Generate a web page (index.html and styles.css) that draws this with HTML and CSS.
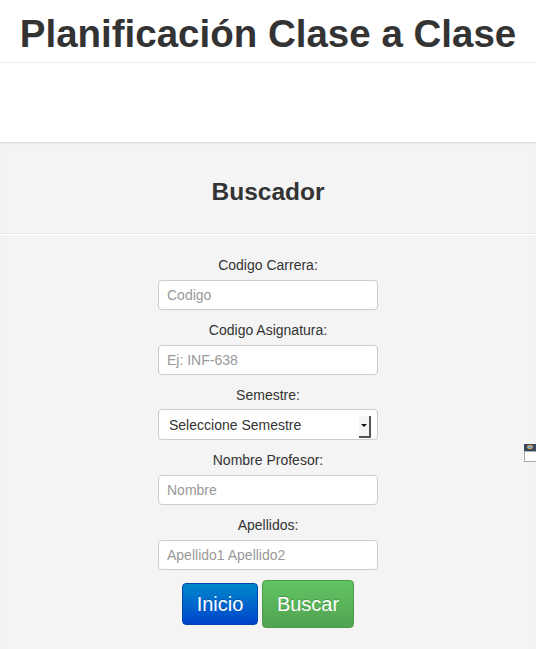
FILE: index.html
```html
<!DOCTYPE html>
<html lang="es">
<head>
<meta charset="utf-8">
<title>Planificación Clase a Clase</title>
<link rel="stylesheet" href="styles.css">
</head>
<body>
<header class="top">
  <h1 class="title">Planificación Clase a Clase</h1>
</header>
<div class="spacer"></div>
<section class="panel">
  <div class="panel-head">
    <h2 class="panel-title">Buscador</h2>
  </div>
  <form class="search">
    <div class="group">
      <label class="lbl">Codigo Carrera:</label>
      <input class="field" type="text" placeholder="Codigo">
    </div>
    <div class="group">
      <label class="lbl">Codigo Asignatura:</label>
      <input class="field" type="text" placeholder="Ej: INF-638">
    </div>
    <div class="group">
      <label class="lbl">Semestre:</label>
      <div class="select-wrap">
        <select class="field select">
          <option>Seleccione Semestre</option>
        </select>
        <span class="arrow"></span>
      </div>
    </div>
    <div class="group">
      <label class="lbl">Nombre Profesor:</label>
      <input class="field" type="text" placeholder="Nombre">
    </div>
    <div class="group">
      <label class="lbl">Apellidos:</label>
      <input class="field" type="text" placeholder="Apellido1 Apellido2">
    </div>
    <div class="actions">
      <button type="button" class="btn btn-primary">Inicio</button>
      <button type="button" class="btn btn-success">Buscar</button>
    </div>
  </form>
  <div class="widget"><span class="widget-bar"><i class="widget-dot"></i></span><span class="widget-box"></span></div>
</section>
</body>
</html>
```

FILE: styles.css
```css
html, body {
  margin: 0;
  padding: 0;
  overflow-x: hidden;
}
body {
  font-family: "Liberation Sans", Arial, Helvetica, sans-serif;
  color: #333;
  background: #fff;
  font-size: 14px;
}
.top {
  padding: 13px 0 7px;
  border-bottom: 1px solid #eee;
  text-align: center;
}
.title {
  margin: 0;
  font-size: 38.5px;
  line-height: 42px;
  font-weight: bold;
  color: #333;
}
.spacer {
  height: 79px;
}
.panel {
  position: relative;
  background: #f4f4f4;
  border-top: 1px solid #dedede;
  box-shadow: inset 0 1px 2px rgba(0,0,0,0.05);
  min-height: 506px;
}
.panel-head {
  padding: 36px 0 28px;
  border-bottom: 1px solid #e9e9e9;
  box-shadow: 0 1px 0 #fff;
  text-align: center;
}
.panel-title {
  margin: 0;
  font-size: 24.5px;
  line-height: 26px;
  font-weight: bold;
  color: #333;
}
.search {
  display: flex;
  flex-direction: column;
  align-items: center;
  padding-top: 21px;
}
.group {
  display: flex;
  flex-direction: column;
  align-items: center;
  margin-bottom: 10px;
}
.lbl {
  line-height: 20px;
  margin-bottom: 5px;
  font-size: 14px;
  color: #333;
}
.field {
  box-sizing: border-box;
  width: 220px;
  height: 30px;
  border: 1px solid #ccc;
  border-radius: 4px;
  background: #fff;
  padding: 0 8px;
  font-family: "Liberation Sans", Arial, sans-serif;
  font-size: 14px;
  color: #333;
  outline: none;
}
.field::placeholder {
  color: #999;
}
.select-wrap {
  position: relative;
  margin-top: -1px;
}
.select {
  -webkit-appearance: none;
  appearance: none;
  padding-left: 10px;
  height: 31px;
}
.arrow {
  position: absolute;
  right: 7px;
  top: 7px;
  width: 10px;
  height: 20px;
  border-right: 2px solid #555;
  border-bottom: 2px solid #555;
  background: #f4f4f4;
  pointer-events: none;
}
.arrow::after {
  content: "";
  position: absolute;
  left: 2px;
  top: 8px;
  border-left: 3px solid transparent;
  border-right: 3px solid transparent;
  border-top: 3px solid #111;
}
.actions {
  display: flex;
  align-items: center;
  gap: 4px;
}
.btn {
  font-family: "Liberation Sans", Arial, sans-serif;
  font-size: 20px;
  color: #fff;
  border-radius: 4px;
  cursor: pointer;
  text-shadow: 0 -1px 0 rgba(0,0,0,0.2);
}
.btn-primary {
  width: 76px;
  height: 42px;
  padding: 0;
  background: linear-gradient(#0088cc, #0044cc);
  border: 1px solid #0044b0;
}
.btn-success {
  width: 92px;
  height: 48px;
  padding: 0;
  background: linear-gradient(#62c462, #51a351);
  border: 1px solid #4a9a4a;
}
.widget {
  position: absolute;
  left: 524px;
  top: 301px;
  width: 14px;
  display: flex;
  flex-direction: column;
}
.widget-bar {
  height: 7px;
  background: #3b4a5e;
  position: relative;
}
.widget-dot {
  position: absolute;
  left: 3px;
  top: 1px;
  width: 6px;
  height: 4px;
  border-radius: 3px;
  background: #6aa8e0;
  border: 1px solid #e8a040;
  box-sizing: border-box;
}
.widget-box {
  height: 11px;
  background: #fff;
  border: 1px solid #aaa;
  box-sizing: border-box;
}
```
